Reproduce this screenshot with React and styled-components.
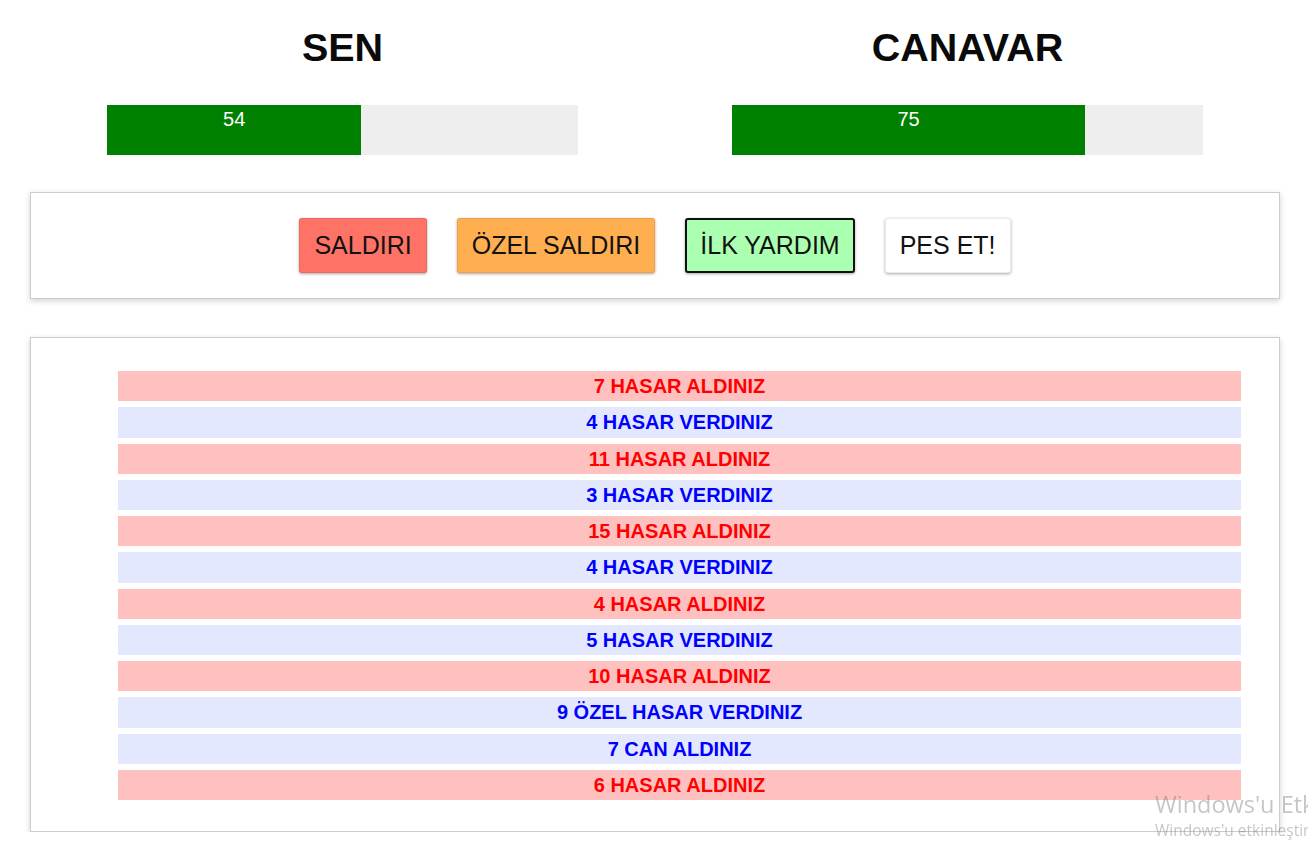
import React from 'react'
import styled, { createGlobalStyle } from 'styled-components'

const GlobalStyle = createGlobalStyle`
  html, body {
    margin: 0;
    padding: 0;
    background: #fff;
    overflow: hidden;
  }

  body {
    font-family: 'Liberation Sans', Arial, sans-serif;
    color: #111;
  }
`

const Page = styled.main`
  width: 1250px;
  padding: 25px 0 0 30px;
`

const Fighters = styled.section`
  display: grid;
  grid-template-columns: 1fr 1fr;
`

const Fighter = styled.div`
  display: flex;
  flex-direction: column;
  align-items: center;
`

const Name = styled.h1`
  margin: 0 0 36px;
  font-size: 39.5px;
  line-height: 44px;
  font-weight: 700;
  color: #0a0a0a;
`

const HealthBar = styled.div`
  width: 471px;
  height: 50px;
  background: #eee;
`

const HealthFill = styled.div`
  height: 100%;
  background: #008000;
  color: #fff;
  font-size: 20px;
  line-height: 23px;
  padding-top: 3px;
  box-sizing: border-box;
  text-align: center;
`

const Panel = styled.section`
  border: 1px solid #ccc;
  box-shadow: 0 2px 6px rgba(0, 0, 0, 0.18);
  background: #fff;
`

const Controls = styled(Panel)`
  margin-top: 37px;
  height: 107px;
  box-sizing: border-box;
  display: flex;
  justify-content: center;
  align-items: center;
  gap: 30px;
`

const colors = {
  attack: '#ff7367',
  special: '#ffaf4f',
  heal: '#aaffb0',
  giveUp: '#ffffff',
}

const Button = styled.button`
  height: 55px;
  padding: 0 ${p => (p.$focused ? '13px' : '14px')};
  border: ${p => (p.$focused ? '2px solid #111' : '1px solid rgba(0, 0, 0, 0.08)')};
  border-radius: 3px;
  background: ${p => colors[p.$kind]};
  box-shadow: 0 1px 3px rgba(0, 0, 0, 0.35);
  font-family: 'Liberation Sans', Arial, sans-serif;
  font-size: 25px;
  color: #111;
  cursor: pointer;
`

const Log = styled(Panel)`
  margin-top: 38px;
  padding: 33px 38px 31px 87px;
`

const LogList = styled.ul`
  list-style: none;
  margin: 0;
  padding: 0;
  display: flex;
  flex-direction: column;
  gap: 6px;
`

const LogItem = styled.li`
  height: 30.27px;
  line-height: 30.27px;
  text-align: center;
  font-size: 20px;
  font-weight: 700;
  color: ${p => (p.$player ? '#0000ff' : '#ff0000')};
  background: ${p => (p.$player ? '#e4e8ff' : '#ffc0c0')};
`

// OS activation notice that sits over the page in the screenshot
const Watermark = styled.div`
  position: fixed;
  left: 1155px;
  top: 789px;
  white-space: nowrap;
  font-family: 'Open Sans', 'Noto Sans', sans-serif;
  color: rgba(120, 120, 120, 0.42);
  pointer-events: none;

  div {
    font-size: 23.5px;
    line-height: 30px;
  }

  span {
    font-size: 15.5px;
    line-height: 18px;
  }
`

const fighters = [
  { name: 'SEN', health: 54 },
  { name: 'CANAVAR', health: 75 },
]

const turns = [
  { player: false, text: '7 HASAR ALDINIZ' },
  { player: true, text: '4 HASAR VERDINIZ' },
  { player: false, text: '11 HASAR ALDINIZ' },
  { player: true, text: '3 HASAR VERDINIZ' },
  { player: false, text: '15 HASAR ALDINIZ' },
  { player: true, text: '4 HASAR VERDINIZ' },
  { player: false, text: '4 HASAR ALDINIZ' },
  { player: true, text: '5 HASAR VERDINIZ' },
  { player: false, text: '10 HASAR ALDINIZ' },
  { player: true, text: '9 ÖZEL HASAR VERDINIZ' },
  { player: true, text: '7 CAN ALDINIZ' },
  { player: false, text: '6 HASAR ALDINIZ' },
]

const App = () => (
  <>
    <GlobalStyle />
    <Page>
      <Fighters>
        {fighters.map(f => (
          <Fighter key={f.name}>
            <Name>{f.name}</Name>
            <HealthBar>
              <HealthFill style={{ width: `${f.health}%` }}>{f.health}</HealthFill>
            </HealthBar>
          </Fighter>
        ))}
      </Fighters>

      <Controls>
        <Button $kind="attack">SALDIRI</Button>
        <Button $kind="special">ÖZEL SALDIRI</Button>
        <Button $kind="heal" $focused>İLK YARDIM</Button>
        <Button $kind="giveUp">PES ET!</Button>
      </Controls>

      <Log>
        <LogList>
          {turns.map((t, i) => (
            <LogItem key={i} $player={t.player}>
              {t.text}
            </LogItem>
          ))}
        </LogList>
      </Log>
    </Page>
    <Watermark>
      <div>Windows'u Etkinleştir</div>
      <span>Windows'u etkinleştirmek için Ayarlar'a gidin.</span>
    </Watermark>
  </>
)

export default App
